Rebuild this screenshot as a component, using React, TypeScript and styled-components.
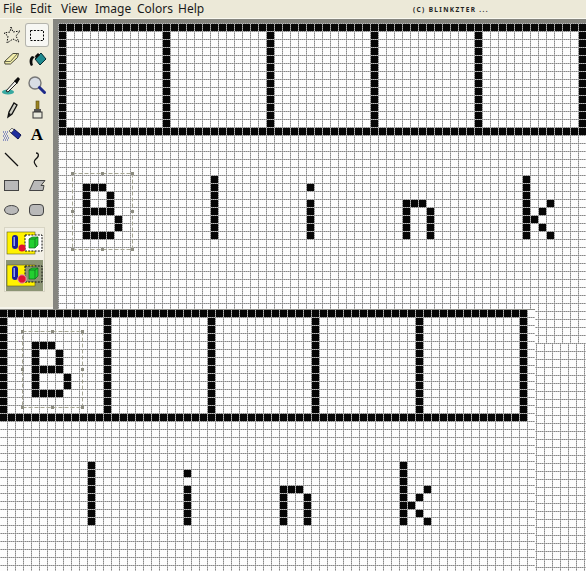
import styled, { createGlobalStyle } from "styled-components";
import type { ReactNode } from "react";

const GlobalStyle = createGlobalStyle`
  html, body {
    margin: 0;
    padding: 0;
    background: #ece9d8;
  }
`;

const Page = styled.div`
  width: 586px;
  height: 571px;
  overflow: hidden;
  display: flex;
  flex-direction: column;
  background: #ece9d8;
  font-family: "Noto Sans", "Liberation Sans", sans-serif;
`;

const MenuBar = styled.div`
  height: 18px;
  flex: none;
  display: flex;
  align-items: center;
  padding-left: 3px;
  border-bottom: 1px solid #faf9f0;
`;

const MenuItem = styled.span<{ $width: number }>`
  width: ${(p) => p.$width}px;
  font-size: 12px;
  line-height: 16px;
  color: #1a1a1a;
`;

const Credit = styled.span`
  margin-left: 199px;
  font-size: 6.5px;
  font-weight: 700;
  letter-spacing: 1.35px;
  color: #222;
  white-space: nowrap;
`;

const TopRow = styled.div`
  height: 290px;
  flex: none;
  display: flex;
`;

const Toolbox = styled.div`
  width: 53px;
  flex: none;
  display: flex;
  flex-direction: column;
  padding-top: 4px;
  box-sizing: border-box;
  border-bottom: 2px solid #f6f5ec;
`;

const ToolGrid = styled.div`
  display: grid;
  grid-template-columns: 24px 24px;
  grid-auto-rows: 24px;
  gap: 1px;
`;

const ToolButton = styled.div<{ $active?: boolean }>`
  width: 24px;
  height: 24px;
  box-sizing: border-box;
  border-radius: 3px;
  background: ${(p) => (p.$active ? "#f7f7f3" : "transparent")};
  box-shadow: ${(p) => (p.$active ? "inset 0 0 0 1px #b4b4ac" : "none")};

  svg {
    display: block;
  }
`;

const ToolLetter = styled.span`
  display: block;
  text-align: center;
  font-family: "Liberation Serif", serif;
  font-weight: 700;
  font-size: 17px;
  line-height: 24px;
  color: #000;
`;

const OptionPanel = styled.div`
  width: 41px;
  height: 65px;
  margin: 5px 0 0 4px;
  box-sizing: border-box;
  padding: 1px;
  display: flex;
  flex-direction: column;
  justify-content: space-between;
  background: #f1efe4;
  border: 1px solid #d8d5c4;
`;

const Option = styled.div<{ $active?: boolean }>`
  height: 31px;
  background: ${(p) => (p.$active ? "#8b9474" : "transparent")};

  svg {
    display: block;
  }
`;

const TopFrame = styled.div`
  flex: 1;
  min-width: 0;
  border-top: 4px solid #85857f;
  border-left: 5px solid #85857f;
`;

const BottomRow = styled.div`
  flex: 1;
  min-height: 0;
  display: flex;
`;

const BottomPane = styled.div`
  width: 535px;
  flex: none;
  box-sizing: border-box;
  border-top: 1px solid #8c8c86;
`;

const SideColumn = styled.div`
  flex: 1;
  display: flex;
  flex-direction: column;
`;

const SideUpper = styled.div`
  height: 34px;
  flex: none;
`;

const SideLower = styled.div`
  flex: 1;
  min-height: 0;
`;

const GridSvg = styled.svg`
  display: block;
  width: 100%;
  height: 100%;
`;

type Cell = [number, number];

const glyphs: Record<string, string[]> = {
  B: ["", "1110", "1001", "1001", "1111", "10001", "10001", "1111"],
  l: ["1", "1", "1", "1", "1", "1", "1", "1"],
  i: ["", "1", "", "1", "1", "1", "1", "1"],
  n: ["", "", "", "111", "1001", "1001", "1001", "1001"],
  k: ["1", "1", "1", "1001", "101", "11", "101", "1001"],
};

const placeGlyph = (name: string, col: number, row: number): Cell[] => {
  const cells: Cell[] = [];
  glyphs[name].forEach((line, r) => {
    line.split("").forEach((bit, c) => {
      if (bit === "1") cells.push([col + c, row + r]);
    });
  });
  return cells;
};

// the film strip: two long rows and a bar every 13 cells
const stripCells = (lastCol: number): Cell[] => {
  const cells: Cell[] = [];
  for (let c = 0; c <= lastCol; c++) {
    cells.push([c, 0], [c, 13]);
  }
  for (let c = 0; c <= lastCol; c += 13) {
    for (let r = 1; r < 13; r++) cells.push([c, r]);
  }
  return cells;
};

const topCells: Cell[] = [
  ...stripCells(66),
  ...placeGlyph("B", 3, 19),
  ...placeGlyph("l", 19, 19),
  ...placeGlyph("i", 31, 19),
  ...placeGlyph("n", 43, 19),
  ...placeGlyph("k", 58, 19),
];

const bottomCells: Cell[] = [
  ...stripCells(65),
  ...placeGlyph("B", 4, 3),
  ...placeGlyph("l", 11, 19),
  ...placeGlyph("i", 23, 19),
  ...placeGlyph("n", 35, 19),
  ...placeGlyph("k", 50, 19),
];

const dots = [0, 2, 4, 6];

type PixelGridProps = {
  id: string;
  offsetX?: number;
  offsetY?: number;
  cells?: Cell[];
  marquee?: { x: number; y: number };
};

const PixelGrid = ({ id, offsetX = 0, offsetY = 0, cells = [], marquee }: PixelGridProps) => (
  <GridSvg>
    <defs>
      <pattern id={id} x={offsetX} y={offsetY} width="8" height="8" patternUnits="userSpaceOnUse">
        <rect width="8" height="8" fill="#fdfdfd" />
        <rect width="1" height="8" fill="#b8b8b8" />
        <rect width="8" height="1" fill="#b8b8b8" />
        {dots.map((d) => (
          <g key={d} fill="#868686">
            <rect x="0" y={d} width="1" height="1" />
            <rect x={d} y="0" width="1" height="1" />
          </g>
        ))}
      </pattern>
    </defs>
    <rect width="100%" height="100%" fill={`url(#${id})`} />
    {cells.map(([c, r]) => (
      <rect key={`${c}-${r}`} x={offsetX + c * 8 + 1} y={offsetY + r * 8 + 1} width="7" height="7" fill="#060606" />
    ))}
    {marquee && (
      <g>
        <rect
          x={marquee.x + 0.5}
          y={marquee.y + 0.5}
          width="60"
          height="76"
          fill="none"
          stroke="#a5a592"
          strokeDasharray="4 2"
        />
        {[0, 30, 60].flatMap((dx) =>
          [0, 38, 76]
            .filter((dy) => !(dx === 30 && dy === 38))
            .map((dy) => (
              <rect key={`${dx}-${dy}`} x={marquee.x + dx - 1} y={marquee.y + dy - 1} width="3" height="3" fill="#8c8c80" />
            )),
        )}
      </g>
    )}
  </GridSvg>
);

const Icon = ({ children }: { children: ReactNode }) => (
  <svg width="24" height="24" viewBox="0 0 24 24">
    {children}
  </svg>
);

const tools: { name: string; active?: boolean; icon: ReactNode }[] = [
  {
    name: "free-select",
    icon: (
      <Icon>
        <path d="M11 4l2 5 7-1-4 5 3 6-6-3-6 4 1-7-4-3 6-1z" fill="none" stroke="#111" strokeDasharray="1.6 1.2" />
      </Icon>
    ),
  },
  {
    name: "select",
    active: true,
    icon: (
      <Icon>
        <rect x="5.5" y="7.5" width="13" height="10" fill="none" stroke="#000" strokeDasharray="2 1.4" />
      </Icon>
    ),
  },
  {
    name: "eraser",
    icon: (
      <Icon>
        <path d="M4.5 13.5L13 5.5h5.5l-1 4-7 6.5H5z" fill="#f3eeaa" stroke="#4a4a3a" />
        <path d="M4.5 13.5h6l7-8" fill="none" stroke="#6a6a50" />
      </Icon>
    ),
  },
  {
    name: "fill",
    icon: (
      <Icon>
        <path d="M10 11l6-6 5 6-6 6z" fill="#1f8a8f" stroke="#062a30" />
        <path d="M10 8l3-3 2 2-4 4z" fill="#0a0a0a" />
        <path d="M7 8C4 10 4 15 6 18l2-1c-1-3-1-6 2-8z" fill="#0a0a0a" />
      </Icon>
    ),
  },
  {
    name: "picker",
    icon: (
      <Icon>
        <ellipse cx="8" cy="19" rx="6" ry="2.5" fill="#37a8a0" />
        <path d="M6 18l9-10 2 2-9 9z" fill="#f4f4f0" stroke="#222" />
        <path d="M14 8l4-4 2 2-3 5z" fill="#0c0c0c" />
      </Icon>
    ),
  },
  {
    name: "zoom",
    icon: (
      <Icon>
        <circle cx="10" cy="10" r="6" fill="#d8dde4" stroke="#777" strokeWidth="1.4" />
        <path d="M14.5 14.5l5 5" stroke="#1d2a8a" strokeWidth="3" strokeLinecap="round" />
      </Icon>
    ),
  },
  {
    name: "pencil",
    icon: (
      <Icon>
        <path d="M8 19l1-5 5-9 3 2-5 9z" fill="#cfcfc4" stroke="#111" strokeWidth="1.3" />
        <path d="M8 19l1-4 2 1z" fill="#111" />
      </Icon>
    ),
  },
  {
    name: "brush",
    icon: (
      <Icon>
        <rect x="11" y="3" width="3" height="8" fill="#9a8420" stroke="#5a4c10" strokeWidth="0.6" />
        <rect x="9" y="11" width="7" height="3" fill="#555" />
        <rect x="8" y="14" width="9" height="6" fill="#e8e8dc" stroke="#333" />
      </Icon>
    ),
  },
  {
    name: "airbrush",
    icon: (
      <Icon>
        <path d="M10 9l4-3 7 6-3 4z" fill="#1f2f9e" stroke="#0a1050" />
        <path d="M9 8l3-3 2 2-3 3z" fill="#e8e8e0" stroke="#333" strokeWidth="0.6" />
        <path d="M3 9h5M4 11h4M3 13h5M4 15h6M3 17h6" stroke="#2b3ca8" strokeDasharray="1 1" />
      </Icon>
    ),
  },
  { name: "text", icon: <ToolLetter>A</ToolLetter> },
  {
    name: "line",
    icon: (
      <Icon>
        <path d="M5 5l13 13" stroke="#111" strokeWidth="1.3" />
      </Icon>
    ),
  },
  {
    name: "curve",
    icon: (
      <Icon>
        <path d="M11 5c3 0 3 3 1 5s-4 3-2 6 2 3 2 3" fill="none" stroke="#111" strokeWidth="1.3" />
      </Icon>
    ),
  },
  {
    name: "rect",
    icon: (
      <Icon>
        <rect x="4.5" y="7.5" width="14" height="10" fill="#b9b9b9" stroke="#444" />
      </Icon>
    ),
  },
  {
    name: "polygon",
    icon: (
      <Icon>
        <path d="M9 7.5h11l-4 5h3l-1 5H4.5z" fill="#b9b9b9" stroke="#444" />
      </Icon>
    ),
  },
  {
    name: "ellipse",
    icon: (
      <Icon>
        <ellipse cx="11.5" cy="12" rx="7" ry="4.5" fill="#b9b9b9" stroke="#444" />
      </Icon>
    ),
  },
  {
    name: "round-rect",
    icon: (
      <Icon>
        <rect x="4.5" y="6.5" width="14" height="11" rx="3.5" fill="#b9b9b9" stroke="#444" />
      </Icon>
    ),
  },
];

// paste option swatch: the dashed box is filled on the first one only
const PasteSwatch = ({ opaque }: { opaque: boolean }) => (
  <svg width="37" height="31" viewBox="0 0 37 31">
    <rect x="1" y={opaque ? 3 : 5} width="28" height={opaque ? 22 : 21} fill="#fff200" stroke="#5a5a20" strokeWidth="0.6" />
    <rect x="19" y="6" width="17" height="16" fill={opaque ? "#fff" : "#8b9474"} stroke="#111" strokeDasharray="2 1.2" />
    <rect x="6" y="6" width="6" height="14" rx="3" fill="#1a1f9c" />
    <rect x="7.5" y="8" width="1.5" height="9" fill="#8fa0f0" />
    <circle cx="16" cy="19" r={opaque ? 3.5 : 4.2} fill="#e01030" stroke={opaque ? "none" : "#e8a0b0"} />
    <path d="M23 10l3-2h6v8l-3 3h-6z" fill="#22d030" stroke="#0d6a18" strokeWidth="0.7" />
    <path d="M23 10h6v9M29 10l3-2" fill="none" stroke="#0d6a18" strokeWidth="0.7" />
  </svg>
);

const menu: [string, number][] = [
  ["File", 27],
  ["Edit", 31],
  ["View", 34],
  ["Image", 42],
  ["Colors", 41],
  ["Help", 36],
];

export default function App() {
  return (
    <Page>
      <GlobalStyle />
      <MenuBar>
        {menu.map(([label, width]) => (
          <MenuItem key={label} $width={width}>
            {label}
          </MenuItem>
        ))}
        <Credit>(C) BLINKZTER ...</Credit>
      </MenuBar>
      <TopRow>
        <Toolbox>
          <ToolGrid>
            {tools.map((t) => (
              <ToolButton key={t.name} $active={t.active}>
                {t.icon}
              </ToolButton>
            ))}
          </ToolGrid>
          <OptionPanel>
            <Option>
              <PasteSwatch opaque />
            </Option>
            <Option $active>
              <PasteSwatch opaque={false} />
            </Option>
          </OptionPanel>
        </Toolbox>
        <TopFrame>
          <PixelGrid id="top-grid" cells={topCells} marquee={{ x: 14, y: 150 }} />
        </TopFrame>
      </TopRow>
      <BottomRow>
        <BottomPane>
          <PixelGrid id="bottom-grid" offsetX={-1} offsetY={-1} cells={bottomCells} marquee={{ x: 22, y: 21 }} />
        </BottomPane>
        <SideColumn>
          <SideUpper>
            <PixelGrid id="side-upper-grid" offsetX={3} offsetY={2} />
          </SideUpper>
          <SideLower>
            <PixelGrid id="side-lower-grid" offsetX={1} />
          </SideLower>
        </SideColumn>
      </BottomRow>
    </Page>
  );
}
